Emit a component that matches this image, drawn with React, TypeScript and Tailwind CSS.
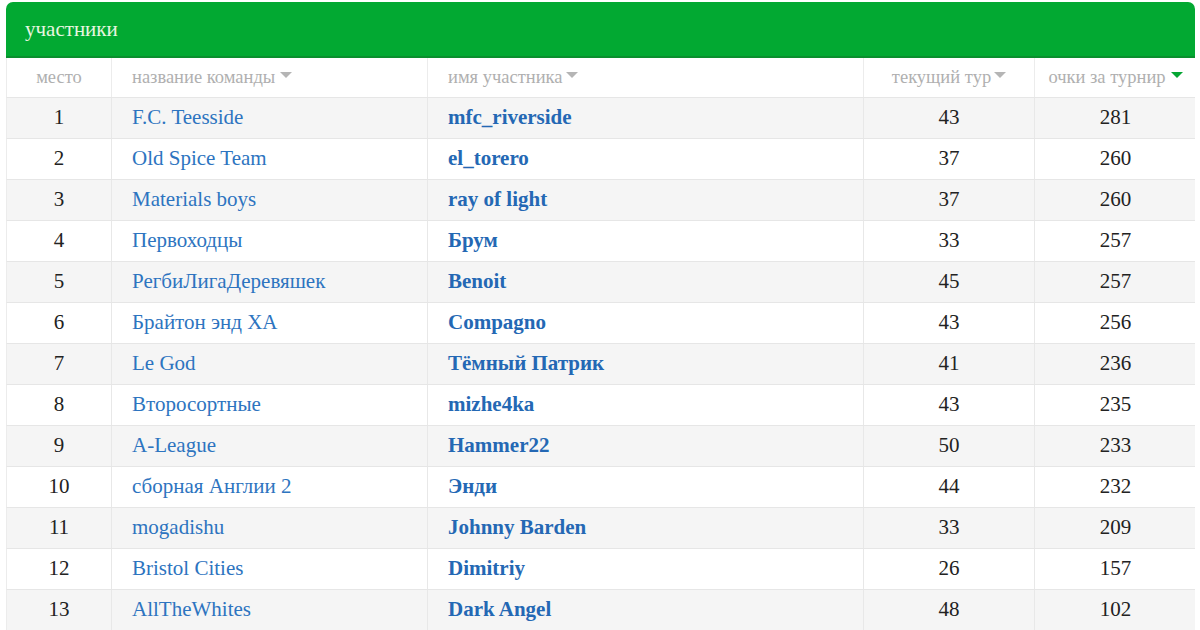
import React from "react";

const rows: [number, string, string, number, number][] = [
  [1, "F.C. Teesside", "mfc_riverside", 43, 281],
  [2, "Old Spice Team", "el_torero", 37, 260],
  [3, "Materials boys", "ray of light", 37, 260],
  [4, "Первоходцы", "Брум", 33, 257],
  [5, "РегбиЛигаДеревяшек", "Benoit", 45, 257],
  [6, "Брайтон энд ХА", "Compagno", 43, 256],
  [7, "Le God", "Тёмный Патрик", 41, 236],
  [8, "Второсортные", "mizhe4ka", 43, 235],
  [9, "A-League", "Hammer22", 50, 233],
  [10, "сборная Англии 2", "Энди", 44, 232],
  [11, "mogadishu", "Johnny Barden", 33, 209],
  [12, "Bristol Cities", "Dimitriy", 26, 157],
  [13, "AllTheWhites", "Dark Angel", 48, 102],
];

function Caret({ green, gap }: { green?: boolean; gap?: boolean }) {
  return (
    <svg width="12" height="6" viewBox="0 0 12 6" className={`inline-block self-start mt-[14px] ${gap ? "ml-[5px]" : "ml-[3px]"}`}>
      <path d="M0 0 L12 0 L6 6 Z" fill={green ? "#06a634" : "#b5b5b5"} />
    </svg>
  );
}

const grid = "grid grid-cols-[104px_316px_436px_171px_162px]";

export default function App() {
  return (
    <div className="bg-white w-[1200px] h-[630px] pt-[2px] pl-[6px]" style={{ fontFamily: '"Liberation Serif", "Times New Roman", serif' }}>
      <div className="w-[1189px]">
        <div className="h-[56px] bg-[#02a932] rounded-t-[7px] border-b-2 border-[#0a8f2e] flex items-center pl-[19px] pt-[2px] text-[21px] text-[#e8f6e0]">
          участники
        </div>
        <div className={`${grid} h-[39px] items-center text-[18.5px] text-[#b0b0b0] border-l border-[#ececec]`}>
          <div className="text-center h-full flex items-center justify-center">место</div>
          <div className="h-full flex items-center pl-[20px] border-l border-[#ececec]">название команды<Caret gap /></div>
          <div className="h-full flex items-center pl-[20px] border-l border-[#ececec]">имя участника<Caret /></div>
          <div className="h-full flex items-center justify-center border-l border-[#ececec]">текущий тур<Caret /></div>
          <div className="h-full flex items-center justify-center border-l border-[#ececec]">очки за турнир<Caret green gap /></div>
        </div>
        {rows.map(([n, team, user, tour, pts]) => (
          <div key={n} className={`${grid} h-[41px] border-t border-[#e6e6e6] border-l border-l-[#ececec] text-[21px] ${n % 2 === 1 ? "bg-[#f5f5f5]" : "bg-white"}`}>
            <div className="flex items-center justify-center text-[#222]">{n}</div>
            <div className="flex items-center pl-[20px] border-l border-[#e8e8e8] text-[#2d74c0]">{team}</div>
            <div className="flex items-center pl-[20px] border-l border-[#e8e8e8] text-[#2468b4] font-bold">{user}</div>
            <div className="flex items-center justify-center border-l border-[#e8e8e8] text-[#222]">{tour}</div>
            <div className="flex items-center justify-center border-l border-[#e8e8e8] text-[#222]">{pts}</div>
          </div>
        ))}
      </div>
    </div>
  );
}
